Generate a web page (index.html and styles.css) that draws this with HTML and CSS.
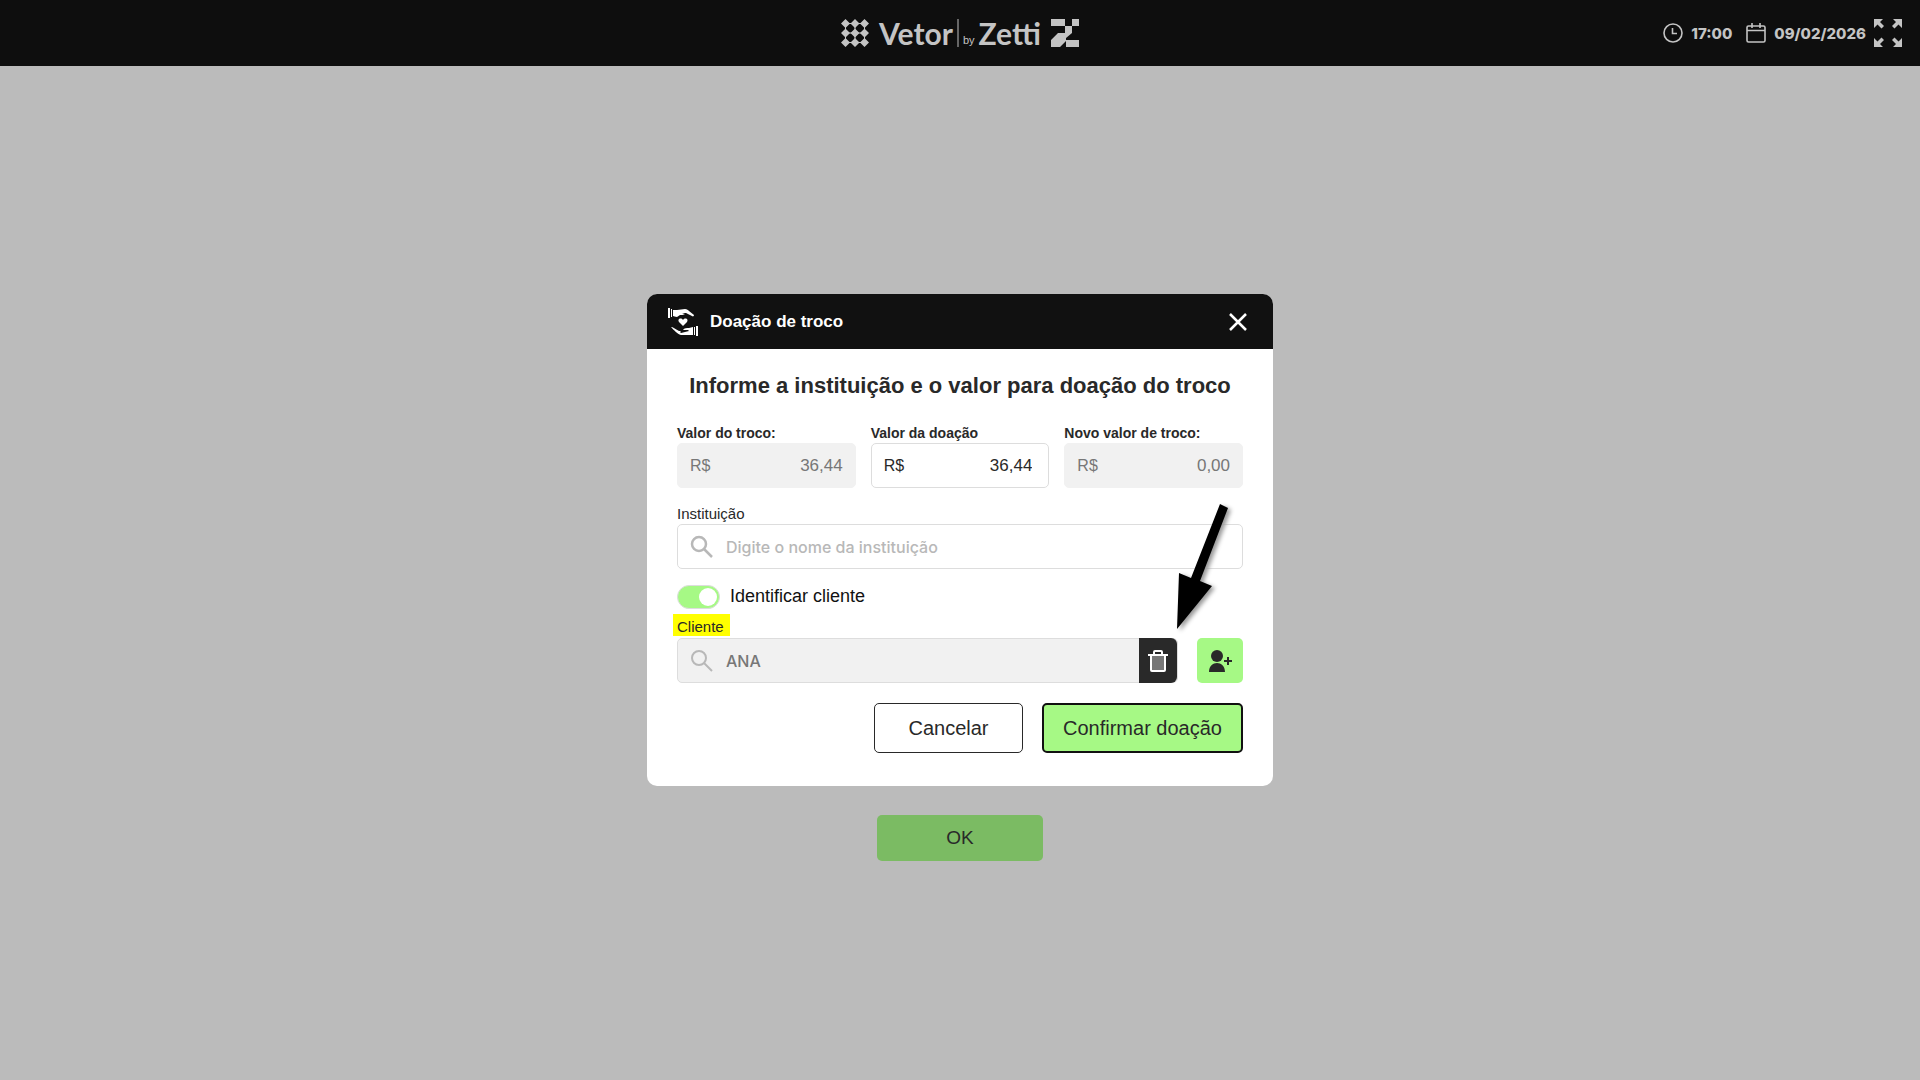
FILE: index.html
```html
<!DOCTYPE html>
<html lang="pt-BR">
<head>
    <meta charset="UTF-8">
    <meta name="viewport" content="width=device-width, initial-scale=1.0">
    <title>Vetor by Zetti - Doação de troco</title>
    <link rel="stylesheet" href="styles.css">
</head>
<body>

    <!-- Top bar -->
    <header class="topbar">
        <div class="logo">
            <svg class="logo-mark" width="28" height="28" viewBox="0 0 28 28" fill="currentColor">
                <path d="M4.500 0L9 4.500 4.500 9 0 4.500zM14 0l4.500 4.500L14 9 9.500 4.500zM23.500 0L28 4.500 23.500 9 19 4.500zM4.500 9.500L9 14l-4.500 4.500L0 14zM14 9.500l4.500 4.500-4.500 4.500L9.500 14zM23.500 9.500L28 14l-4.500 4.500L19 14zM4.500 19L9 23.500 4.500 28 0 23.500zM14 19l4.500 4.500L14 28l-4.500-4.500zM23.500 19l4.500 4.500-4.500 4.500-4.500-4.500z"/>
                <path d="M8 4h12v1H8zM8 13.500h12v1H8zM8 23h12v1H8zM4 8h1v12H4zM13.500 8h1v12h-1zM23 8h1v12h-1z"/>
            </svg>
            <span class="logo-name">Vetor</span>
            <span class="logo-divider"></span>
            <span class="logo-by">by</span>
            <span class="logo-name">Zetti</span>
            <svg class="logo-zetti" width="28" height="28" viewBox="0 0 28 28" fill="currentColor">
                <path d="M0 0h14v7H0zM21 0h7v7h-7zM14 7h7v7h-7zM7 14h14l-6 5v2h13v7H15v-6l-6 6H0v-7z"/>
            </svg>
        </div>

        <div class="status">
            <svg width="20" height="20" viewBox="0 0 20 20" fill="none" stroke="currentColor" stroke-width="1.600">
                <circle cx="10" cy="10" r="9"/>
                <path d="M9.500 5v5.500H14"/>
            </svg>
            <time class="status-time">17:00</time>
            <svg width="20" height="20" viewBox="0 0 20 20" fill="none" stroke="currentColor" stroke-width="1.600">
                <rect x="1" y="3" width="18" height="16" rx="1.500"/>
                <path d="M1 7.500h18M6 0v5M14 0v5"/>
            </svg>
            <time class="status-date">09/02/2026</time>
            <button class="icon-button" type="button" aria-label="Tela cheia">
                <svg width="28" height="28" viewBox="0 0 28 28" fill="currentColor">
                    <path d="M0 0h9L6 3l4 4-2.500 2.500-4-4L0 9zM28 0h-9l3 3-4 4 2.500 2.500 4-4L28 9zM0 28h9l-3-3 4-4-2.500-2.500-4 4L0 19zM28 28h-9l3-3-4-4 2.500-2.500 4 4L28 19z"/>
                </svg>
            </button>
        </div>
    </header>

    <main class="page">
        <button class="ok-button" type="button">OK</button>
    </main>

    <!-- Donation modal -->
    <div class="overlay">
        <form class="modal" role="dialog" aria-labelledby="modal-title">
            <div class="modal-header">
                <svg width="32" height="30" viewBox="0 0 32 30" fill="#fff">
                    <path d="M1 1h2v10H1zM4 2h1v8H4zM6 3h4l8-1c2 0 3 1 4 2l5 4c0 1-1 2-2 1l-6-3h-4l3 1c-1 1-4 1-5 1l-3 2c-2 0-3-1-4-1z"/>
                    <path d="M16 19l-4-4c-2-3 2-5 4-2 2-3 6-1 4 2z"/>
                    <path d="M4 20c2 0 4 2 8 4h2l-1 1 1 1 8-2-1-1h-5c1-2 4-2 6-2l4-1v8h-12c-4-1-7-5-10-8zM27 20h1v8h-1zM29 19h2v10h-2z"/>
                </svg>
                <h1 class="modal-title" id="modal-title">Doação de troco</h1>
                <button class="icon-button close" type="button" aria-label="Fechar">
                    <svg width="18" height="18" viewBox="0 0 18 18" fill="none" stroke="#fff" stroke-width="2.500">
                        <path d="M1 1l16 16M17 1L1 17"/>
                    </svg>
                </button>
            </div>

            <div class="modal-body">
                <h2 class="heading">Informe a instituição e o valor para doação do troco</h2>

                <div class="values">
                    <div class="value">
                        <label class="value-label" for="troco">Valor do troco:</label>
                        <div class="field disabled">
                            <span>R$</span>
                            <input class="amount" id="troco" type="text" value="36,44" disabled>
                        </div>
                    </div>
                    <div class="value">
                        <label class="value-label" for="doacao">Valor da doação</label>
                        <div class="field editable">
                            <span>R$</span>
                            <input class="amount" id="doacao" type="text" value="36,44">
                        </div>
                    </div>
                    <div class="value">
                        <label class="value-label" for="novo">Novo valor de troco:</label>
                        <div class="field disabled">
                            <span>R$</span>
                            <input class="amount" id="novo" type="text" value="0,00" disabled>
                        </div>
                    </div>
                </div>

                <label class="field-label" for="instituicao">Instituição</label>
                <div class="field search">
                    <svg width="24" height="24" viewBox="0 0 24 24" fill="none" stroke="#b8b8b8" stroke-width="2.500">
                        <circle cx="9" cy="9" r="7"/>
                        <path d="M14 14l8 8"/>
                    </svg>
                    <input id="instituicao" type="text" placeholder="Digite o nome da instituição">
                </div>

                <label class="toggle">
                    <input type="checkbox" role="switch" checked>
                    <span>Identificar cliente</span>
                </label>

                <label class="field-label highlight" for="cliente">Cliente</label>
                <div class="client">
                    <div class="field search filled">
                        <svg width="24" height="24" viewBox="0 0 24 24" fill="none" stroke="#b8b8b8" stroke-width="2">
                            <circle cx="9" cy="9" r="7"/>
                            <path d="M14 14l8 8"/>
                        </svg>
                        <input id="cliente" type="text" value="ANA" disabled>
                        <button class="remove" type="button" aria-label="Remover cliente">
                            <svg width="20" height="24" viewBox="0 0 20 24" fill="none" stroke="#fff" stroke-width="2">
                                <path d="M3 6v15q0 1 1 1h12q1 0 1-1V6" fill="#777"/>
                                <path d="M0 6h20M6 5V3q0-1 1-1h6q1 0 1 1v2"/>
                            </svg>
                        </button>
                    </div>
                    <button class="add" type="button" aria-label="Adicionar cliente">
                        <svg width="24" height="24" viewBox="0 0 24 24" fill="#292929">
                            <circle cx="9" cy="7" r="6"/>
                            <path d="M1 23c0-12 16-12 16 0zM16 11h3V8h2v3h3v2h-3v3h-2v-3h-3z"/>
                        </svg>
                    </button>
                </div>

                <div class="actions">
                    <button class="cancel" type="button">Cancelar</button>
                    <button class="confirm" type="submit">Confirmar doação</button>
                </div>
            </div>

            <svg class="pointer" width="62" height="140" viewBox="0 0 62 140">
                <path d="M49 2l8 4-28 73 12 5-35 43 2-56 12 5z"/>
            </svg>
        </form>
    </div>

</body>
</html>
```

FILE: styles.css
```css
* {
    margin: 0;
    padding: 0;
    box-sizing: border-box;
}

body {
    min-height: 100vh;
    display: flex;
    flex-direction: column;
    background-color: #bbb;
    color: #292929;
    font-family: 'Liberation Sans', Arial, sans-serif;
    font-size: 16px;
}

button, input {
    font: inherit;
    color: inherit;
}

button {
    border: none;
    cursor: pointer;
}

svg {
    display: block;
    flex-shrink: 0;
}

/* Top bar */
.topbar {
    height: 66px;
    padding: 0 18px;
    display: grid;
    grid-template-columns: 1fr auto 1fr;
    align-items: center;
    background-color: #0e0e0e;
    color: #c4c4c4;
}

.logo {
    grid-column: 2;
    display: flex;
    align-items: center;
}

.logo-name {
    font-family: Lato, sans-serif;
    font-size: 30px;
    font-weight: 700;
    line-height: 32px;
}

.logo-mark {
    margin-right: 10px;
}

.logo-divider {
    width: 2px;
    height: 28px;
    margin: 0 4px;
    background-color: #666;
}

.logo-by {
    margin-right: 4px;
    padding-top: 14px;
    font-size: 11px;
}

.logo-zetti {
    margin-left: 10px;
}

.status {
    display: flex;
    justify-content: flex-end;
    align-items: center;
    gap: 8px;
    font-family: Inter, sans-serif;
    font-size: 15px;
    font-weight: 800;
}

.status-time {
    margin-right: 6px;
}

.icon-button {
    background: none;
}

/* Page behind the modal */
.page {
    flex: 1;
    display: flex;
    flex-direction: column;
    align-items: center;
    justify-content: flex-end;
    padding-bottom: 219px;
}

.ok-button {
    width: 166px;
    height: 46px;
    border-radius: 5px;
    background-color: #7bbb63;
    font-size: 19px;
}

/* Modal */
.overlay {
    position: fixed;
    inset: 0;
    display: flex;
    justify-content: center;
    align-items: center;
}

.modal {
    position: relative;
    width: 100%;
    max-width: 626px;
    border-radius: 10px;
    background-color: #fff;
}

.modal-header {
    height: 55px;
    padding: 0 26px 0 20px;
    display: flex;
    align-items: center;
    gap: 11px;
    border-radius: 10px 10px 0 0;
    background-color: #111;
    color: #fff;
}

.modal-title {
    flex: 1;
    font-size: 17px;
}

.modal-body {
    padding: 20px 30px 33px;
}

.heading {
    margin-bottom: 20px;
    font-size: 22px;
    line-height: 34px;
    text-align: center;
}

.values {
    display: flex;
    gap: 15px;
    margin-bottom: 16px;
}

.value {
    flex: 1;
    min-width: 0;
}

.value-label, .field-label {
    display: block;
    font-size: 15px;
    line-height: 20px;
}

.value-label {
    font-size: 14px;
    font-weight: 700;
}

.field {
    height: 45px;
    padding: 0 12px;
    display: flex;
    align-items: center;
    border: 1px solid #ddd;
    border-radius: 5px;
}

.field input {
    flex: 1;
    min-width: 0;
    border: none;
    outline: none;
    background: none;
}

.field .amount {
    font-size: 17px;
    text-align: right;
}

.field.disabled {
    border-color: #f1f1f1;
    background-color: #f1f1f1;
    color: #777;
}

.field.editable {
    padding-right: 16px;
}

.search {
    gap: 12px;
}

.search input {
    font-family: Inter, sans-serif;
    font-weight: 500;
}

.search input::placeholder {
    color: #b8b8b8;
}

.toggle {
    height: 45px;
    padding-top: 10px;
    display: flex;
    align-items: center;
    gap: 10px;
    color: #111;
    font-size: 18px;
}

.toggle input {
    appearance: none;
    width: 43px;
    height: 24px;
    padding: 2px;
    display: flex;
    justify-content: flex-end;
    border: 1px solid #ddd;
    border-radius: 12px;
    background-color: #a6f985;
}

.toggle input::before {
    content: "";
    width: 18px;
    height: 18px;
    border-radius: 50%;
    background-color: #fff;
}

.highlight {
    width: fit-content;
    margin: 0 -4px 2px;
    padding: 4px 6px 0 4px;
    line-height: 18px;
    background-color: #ff0;
}

.client {
    display: flex;
    gap: 19px;
}

.filled {
    flex: 1;
    padding-right: 0;
    background-color: #f1f1f1;
    color: #777;
}

.remove {
    width: 38px;
    height: 45px;
    display: flex;
    justify-content: center;
    align-items: center;
    border-radius: 0 6px 6px 0;
    background-color: #292929;
}

.add {
    width: 46px;
    display: flex;
    justify-content: center;
    align-items: center;
    border-radius: 5px;
    background-color: #a6f985;
}

.actions {
    display: flex;
    justify-content: flex-end;
    gap: 19px;
    margin-top: 20px;
}

.cancel, .confirm {
    height: 50px;
    border-radius: 5px;
    font-size: 20px;
}

.cancel {
    width: 149px;
    border: 1px solid #292929;
    background-color: #fff;
}

.confirm {
    width: 201px;
    border: 2px solid #111;
    background-color: #a6f985;
}

/* Arrow that points at the remove button */
.pointer {
    position: absolute;
    top: 208px;
    right: 40px;
    filter: drop-shadow(3px 2px 2px #999);
    pointer-events: none;
}
```
